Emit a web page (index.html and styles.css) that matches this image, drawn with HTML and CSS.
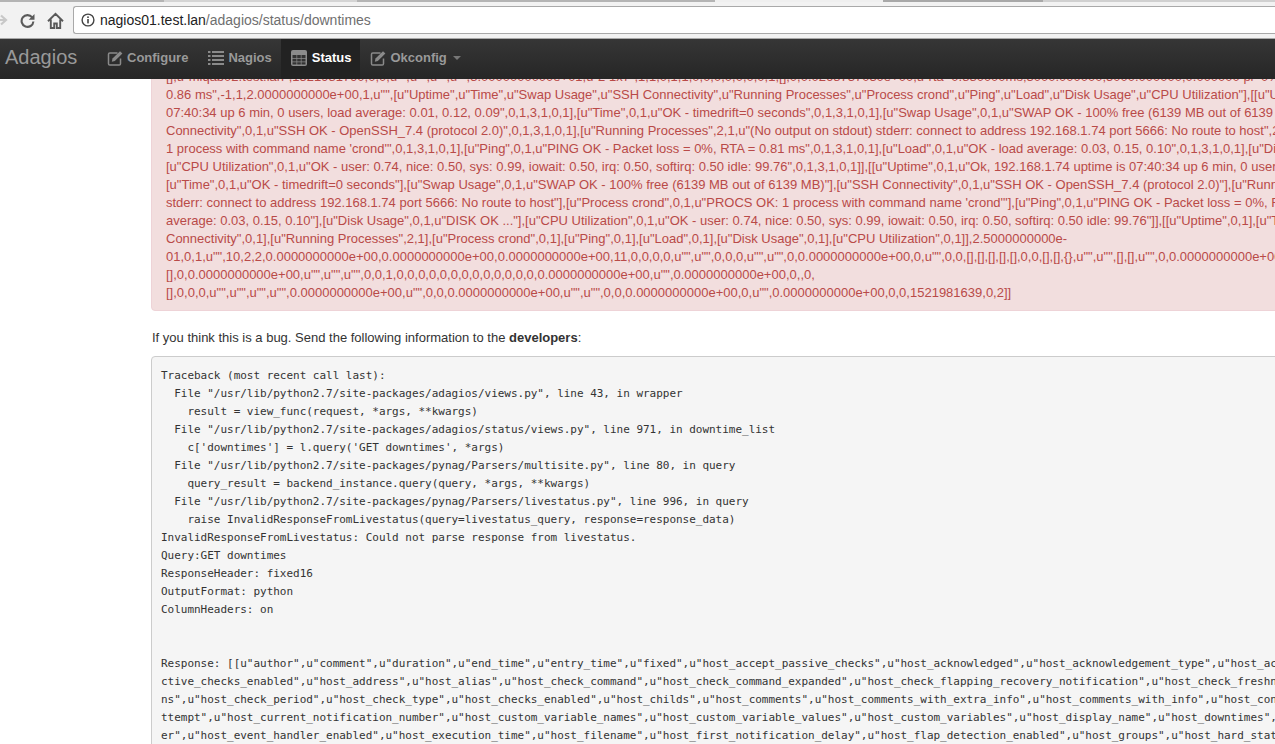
FILE: index.html
```html
<!DOCTYPE html>
<html lang="en">
<head>
<meta charset="utf-8">
<title>Adagios</title>
<link rel="stylesheet" href="styles.css">
</head>
<body>
<header class="chrome">
  <div class="tabstrip">
    <span class="tab tab-a"></span>
    <span class="tab tab-b"></span>
    <span class="tab tab-a tab-c"></span>
    <span class="tab tab-d"></span>
    <span class="tab tab-a tab-e"></span>
    <span class="tab tab-f"></span>
  </div>
  <div class="toolbar">
    <svg class="tool-icon back" width="12" height="16" viewBox="0 0 12 16"><path d="M0 8h9M5 3.500 10 8l-5 4.500" fill="none" stroke="#c8c8c8" stroke-width="2.200"/></svg>
    <svg class="tool-icon reload" width="15" height="15" viewBox="0 0 15 15"><path d="M12.200 4.400A5.900 5.900 0 1 0 13.400 8.500" fill="none" stroke="#5a5a5a" stroke-width="2.100"/><path d="M14.500 1v5.800H8.700z" fill="#5a5a5a"/></svg>
    <svg class="tool-icon home" width="17" height="17" viewBox="0 0 17 17"><path d="M1 9.200 8.500 1.800 16 9.200M3.800 7.500V16h3.400v-4.500h2.600V16h3.400V7.500" fill="none" stroke="#5a5a5a" stroke-width="1.900"/></svg>
    <div class="omnibox">
      <svg class="info" width="14" height="14" viewBox="0 0 14 14"><circle cx="7" cy="7" r="5.900" fill="none" stroke="#444" stroke-width="1.400"/><rect x="6.200" y="6" width="1.600" height="4.400" fill="#444"/><rect x="6.200" y="3.400" width="1.600" height="1.600" fill="#444"/></svg>
      <span class="host">nagios01.test.lan</span><span class="path">/adagios/status/downtimes</span>
    </div>
  </div>
</header>
<nav class="navbar">
  <a class="brand">Adagios</a>
  <a class="nav-item">
    <svg class="nav-icon" width="16" height="16" viewBox="0 0 16 16"><path d="M10.500 3H2.800A1.300 1.300 0 0 0 1.500 4.300v9.400A1.300 1.300 0 0 0 2.800 15h9.400a1.300 1.300 0 0 0 1.300-1.300V8.500" fill="none" stroke="currentColor" stroke-width="1.500"/><path d="M5.500 8.500 13 1.200l2.400 2.300-7.600 7.500-3 .7z" fill="currentColor"/></svg>Configure
  </a>
  <a class="nav-item tight">
    <svg class="nav-icon" width="16" height="14" viewBox="0 0 16 14"><path d="M0 0h2.500v2H0zM4 0h12v2H4zM0 4h2.500v2H0zM4 4h12v2H4zM0 8h2.500v2H0zM4 8h12v2H4zM0 12h2.500v2H0zM4 12h12v2H4z" fill="currentColor"/></svg>Nagios
  </a>
  <a class="nav-item tight active">
    <svg class="nav-icon table-icon" width="16" height="16" viewBox="0 0 16 16"><rect width="16" height="16" rx="2" fill="#8c8c8c"/><path d="M1.500 5h4v3h-4zM6.200 5h3.600v3H6.200zM10.500 5h4v3h-4zM1.500 8.800h4v2.600h-4zM6.200 8.800h3.600v2.600H6.200zM10.500 8.800h4v2.600h-4zM1.500 12.200h4v2.300h-4zM6.200 12.200h3.600v2.300H6.200zM10.500 12.200h4v2.300h-4z" fill="#333"/></svg>Status
  </a>
  <a class="nav-item">
    <svg class="nav-icon" width="16" height="16" viewBox="0 0 16 16"><path d="M10.500 3H2.800A1.300 1.300 0 0 0 1.500 4.300v9.400A1.300 1.300 0 0 0 2.800 15h9.400a1.300 1.300 0 0 0 1.300-1.300V8.500" fill="none" stroke="currentColor" stroke-width="1.500"/><path d="M5.500 8.500 13 1.200l2.400 2.300-7.600 7.500-3 .7z" fill="currentColor"/></svg>Okconfig<span class="caret"></span>
  </a>
</nav>
<main class="viewport">
  <div class="content">
    <div class="alert"><div class="ln">[],u"mlqab02.test.lan",1521981790,0,0,u"",u"",u"",u"",3.0000000000e+01,u"2 1x7",1,1,0,1,1,0,0,0,0,0,0,0,1,[],0,0.0268737030e+00,u"rta=0.880000ms;3000.000000;5000.000000;0.000000 pl=0%;80;100;;",0</div>
<div class="ln">0.86 ms",-1,1,2.0000000000e+00,1,u"",[u"Uptime",u"Time",u"Swap Usage",u"SSH Connectivity",u"Running Processes",u"Process crond",u"Ping",u"Load",u"Disk Usage",u"CPU Utilization"],[[u"Uptime",0,1,u"Ok, 192.168.1.74 uptime is</div>
<div class="ln">07:40:34 up 6 min, 0 users, load average: 0.01, 0.12, 0.09",0,1,3,1,0,1],[u"Time",0,1,u"OK - timedrift=0 seconds",0,1,3,1,0,1],[u"Swap Usage",0,1,u"SWAP OK - 100% free (6139 MB out of 6139 MB)",0,1,3,1,0,1],[u"SSH</div>
<div class="ln">Connectivity",0,1,u"SSH OK - OpenSSH_7.4 (protocol 2.0)",0,1,3,1,0,1],[u"Running Processes",2,1,u"(No output on stdout) stderr: connect to address 192.168.1.74 port 5666: No route to host",2,1,3,1,0,1],[u"Process crond",0,1,u"PROCS OK:</div>
<div class="ln">1 process with command name 'crond'",0,1,3,1,0,1],[u"Ping",0,1,u"PING OK - Packet loss = 0%, RTA = 0.81 ms",0,1,3,1,0,1],[u"Load",0,1,u"OK - load average: 0.03, 0.15, 0.10",0,1,3,1,0,1],[u"Disk Usage",0,1,u"DISK OK ...",0,1,3,1,0,1],</div>
<div class="ln">[u"CPU Utilization",0,1,u"OK - user: 0.74, nice: 0.50, sys: 0.99, iowait: 0.50, irq: 0.50, softirq: 0.50 idle: 99.76",0,1,3,1,0,1]],[[u"Uptime",0,1,u"Ok, 192.168.1.74 uptime is 07:40:34 up 6 min, 0 users, load average: 0.01, 0.12, 0.09"],</div>
<div class="ln">[u"Time",0,1,u"OK - timedrift=0 seconds"],[u"Swap Usage",0,1,u"SWAP OK - 100% free (6139 MB out of 6139 MB)"],[u"SSH Connectivity",0,1,u"SSH OK - OpenSSH_7.4 (protocol 2.0)"],[u"Running Processes",2,1,u"(No output on stdout)</div>
<div class="ln">stderr: connect to address 192.168.1.74 port 5666: No route to host"],[u"Process crond",0,1,u"PROCS OK: 1 process with command name 'crond'"],[u"Ping",0,1,u"PING OK - Packet loss = 0%, RTA = 0.81 ms"],[u"Load",0,1,u"OK - load</div>
<div class="ln">average: 0.03, 0.15, 0.10"],[u"Disk Usage",0,1,u"DISK OK ..."],[u"CPU Utilization",0,1,u"OK - user: 0.74, nice: 0.50, sys: 0.99, iowait: 0.50, irq: 0.50, softirq: 0.50 idle: 99.76"]],[[u"Uptime",0,1],[u"Time",0,1],[u"Swap Usage",0,1],[u"SSH</div>
<div class="ln">Connectivity",0,1],[u"Running Processes",2,1],[u"Process crond",0,1],[u"Ping",0,1],[u"Load",0,1],[u"Disk Usage",0,1],[u"CPU Utilization",0,1]],2.5000000000e-</div>
<div class="ln">01,0,1,u"",10,2,2,0.0000000000e+00,0.0000000000e+00,0.0000000000e+00,11,0,0,0,0,u"",u"",0,0,0,u"",u"",0,0.0000000000e+00,0,u"",0,0,[],[],[],[],[],0,0,[],[],{},u"",u"",[],[],u"",0,0.0000000000e+00,u"",u"",0,0</div>
<div class="ln">[],0,0.0000000000e+00,u"",u"",u"",0,0,1,0,0,0,0,0,0,0,0,0,0,0,0,0,0.0000000000e+00,u"",0.0000000000e+00,0,,0,</div>
<div class="ln">[],0,0,0,u"",u"",u"",u"",0.0000000000e+00,u"",0,0,0.0000000000e+00,u"",u"",0,0,0.0000000000e+00,0,u"",0.0000000000e+00,0,0,1521981639,0,2]]</div></div>
    <p class="report">If you think this is a bug. Send the following information to the <strong>developers</strong>:</p>
    <pre class="trace">Traceback (most recent call last):
  File "/usr/lib/python2.7/site-packages/adagios/views.py", line 43, in wrapper
    result = view_func(request, *args, **kwargs)
  File "/usr/lib/python2.7/site-packages/adagios/status/views.py", line 971, in downtime_list
    c['downtimes'] = l.query('GET downtimes', *args)
  File "/usr/lib/python2.7/site-packages/pynag/Parsers/multisite.py", line 80, in query
    query_result = backend_instance.query(query, *args, **kwargs)
  File "/usr/lib/python2.7/site-packages/pynag/Parsers/livestatus.py", line 996, in query
    raise InvalidResponseFromLivestatus(query=livestatus_query, response=response_data)
InvalidResponseFromLivestatus: Could not parse response from livestatus.
Query:GET downtimes
ResponseHeader: fixed16
OutputFormat: python
ColumnHeaders: on


Response: [[u"author",u"comment",u"duration",u"end_time",u"entry_time",u"fixed",u"host_accept_passive_checks",u"host_acknowledged",u"host_acknowledgement_type",u"host_ac
ctive_checks_enabled",u"host_address",u"host_alias",u"host_check_command",u"host_check_command_expanded",u"host_check_flapping_recovery_notification",u"host_check_freshness",u"host_check_interval",u"host_check_optio
ns",u"host_check_period",u"host_check_type",u"host_checks_enabled",u"host_childs",u"host_comments",u"host_comments_with_extra_info",u"host_comments_with_info",u"host_contact_groups",u"host_contacts",u"host_current_a
ttempt",u"host_current_notification_number",u"host_custom_variable_names",u"host_custom_variable_values",u"host_custom_variables",u"host_display_name",u"host_downtimes",u"host_downtimes_with_info",u"host_event_handl
er",u"host_event_handler_enabled",u"host_execution_time",u"host_filename",u"host_first_notification_delay",u"host_flap_detection_enabled",u"host_groups",u"host_hard_state",u"host_has_been_checked",u"host_high_flap_th</pre>
  </div>
</main>
</body>
</html>
```
FILE: styles.css
```css
* { box-sizing: border-box; }
html, body { margin: 0; height: 744px; overflow: hidden; background: #fff; }
body { font-family: "Liberation Sans", Arial, sans-serif; font-size: 13px; line-height: 18px; color: #333; display: flex; flex-direction: column; }

.chrome { height: 39px; background: #f2f2f2; border-bottom: 1px solid #a8a8a8; flex: none; }
.tabstrip { height: 2px; display: flex; }
.tab { height: 2px; flex: none; }
.tab-a { width: 164px; background: #b4b4b4; }
.tab-b { width: 193px; background: #d4d4d4; }
.tab-c { width: 358px; }
.tab-d { width: 168px; background: #efefef; }
.tab-e { width: 160px; background: #a8a8a8; }
.tab-f { flex: 1; background: #d0d0d0; }
.toolbar { height: 36px; display: flex; align-items: center; }
.tool-icon { flex: none; }
.back { margin-left: -4px; margin-right: 12px; }
.reload { margin-right: 12px; }
.home { margin-right: 9px; }
.omnibox { flex: 1; height: 28px; background: #fff; border: 1px solid #a9a9a9; border-right: 0; border-radius: 3px 0 0 3px; display: flex; align-items: center; padding-left: 7px; font-size: 14px; white-space: pre; }
.info { margin-right: 5px; flex: none; }
.host { color: #222; }
.path { color: #6f6f6f; }

.navbar { height: 40px; flex: none; display: flex; align-items: stretch; background: linear-gradient(#363636, #262626); position: relative; z-index: 2; }
.brand { font-size: 20px; line-height: 37px; color: #999; margin-left: 5px; width: 92px; flex: none; }
.nav-item { display: flex; align-items: center; gap: 4px; color: #999; font-weight: bold; padding: 0 10px 3px; }
.nav-item.tight { padding-right: 9px; }
.nav-icon { flex: none; color: #8a8a8a; }
.nav-item.active { color: #fff; background: #222; }
.table-icon { margin-right: 1px; }
.caret { width: 0; height: 0; border: 4px solid transparent; border-top-color: #777; border-bottom: 0; margin-left: 2px; }

.viewport { flex: 1; overflow: hidden; min-height: 0; }
.content { margin-top: -12px; padding-left: 151px; width: 1700px; }
.alert { background: #f2dede; border: 1px solid #eed3d7; border-radius: 4px; color: #b94a48; padding: 0 0 8px 14px; }
.ln { white-space: pre; height: 18px; }
.report { margin: 18px 0 9px 1px; }
.report strong { font-weight: bold; }
.trace { margin: 0; padding: 10px 9px 9px; background: #f5f5f5; border: 1px solid #ccc; border-radius: 4px; font-family: "DejaVu Sans Mono", "Liberation Mono", monospace; font-size: 11px; letter-spacing: -0.02px; line-height: 18px; color: #333; white-space: pre; }
```
